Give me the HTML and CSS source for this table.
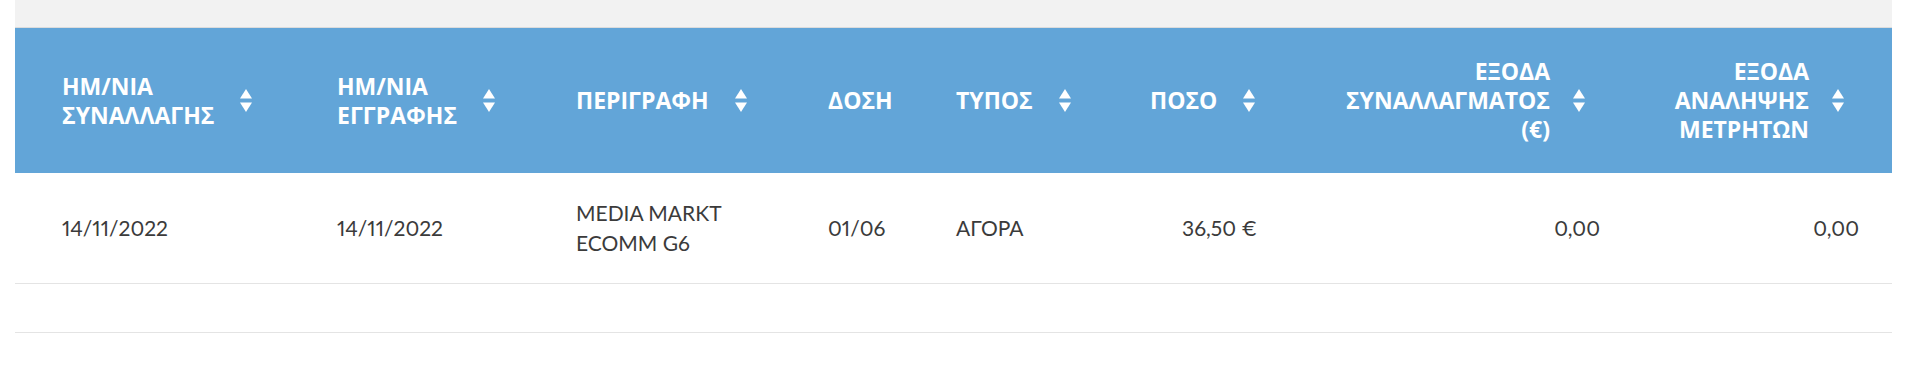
FILE: index.html
```html
<!DOCTYPE html>
<html lang="el">
<head>
<meta charset="utf-8">
<title>Κινήσεις</title>
<link rel="stylesheet" href="styles.css">
</head>
<body>
<div class="page">
  <div class="topbar"></div>
  <div class="table">
    <div class="row head">
      <div class="cell"><span class="label">ΗΜ/ΝΙΑ<br>ΣΥΝΑΛΛΑΓΗΣ</span><svg class="sort" viewBox="0 0 12 23" width="12" height="23"><polygon points="6,0 12,9.5 0,9.5"/><polygon points="0,13.5 12,13.5 6,23"/></svg></div>
      <div class="cell"><span class="label">ΗΜ/ΝΙΑ<br>ΕΓΓΡΑΦΗΣ</span><svg class="sort" viewBox="0 0 12 23" width="12" height="23"><polygon points="6,0 12,9.5 0,9.5"/><polygon points="0,13.5 12,13.5 6,23"/></svg></div>
      <div class="cell"><span class="label">ΠΕΡΙΓΡΑΦΗ</span><svg class="sort" viewBox="0 0 12 23" width="12" height="23"><polygon points="6,0 12,9.5 0,9.5"/><polygon points="0,13.5 12,13.5 6,23"/></svg></div>
      <div class="cell"><span class="label">ΔΟΣΗ</span></div>
      <div class="cell"><span class="label">ΤΥΠΟΣ</span><svg class="sort" viewBox="0 0 12 23" width="12" height="23"><polygon points="6,0 12,9.5 0,9.5"/><polygon points="0,13.5 12,13.5 6,23"/></svg></div>
      <div class="cell"><span class="label">ΠΟΣΟ</span><svg class="sort" viewBox="0 0 12 23" width="12" height="23"><polygon points="6,0 12,9.5 0,9.5"/><polygon points="0,13.5 12,13.5 6,23"/></svg></div>
      <div class="cell end"><span class="label">ΕΞΟΔΑ<br>ΣΥΝΑΛΛΑΓΜΑΤΟΣ<br>(€)</span><svg class="sort" viewBox="0 0 12 23" width="12" height="23"><polygon points="6,0 12,9.5 0,9.5"/><polygon points="0,13.5 12,13.5 6,23"/></svg></div>
      <div class="cell end"><span class="label">ΕΞΟΔΑ<br>ΑΝΑΛΗΨΗΣ<br>ΜΕΤΡΗΤΩΝ</span><svg class="sort" viewBox="0 0 12 23" width="12" height="23"><polygon points="6,0 12,9.5 0,9.5"/><polygon points="0,13.5 12,13.5 6,23"/></svg></div>
    </div>
    <div class="row data">
      <div class="cell">14/11/2022</div>
      <div class="cell">14/11/2022</div>
      <div class="cell desc">MEDIA MARKT ECOMM G6</div>
      <div class="cell">01/06</div>
      <div class="cell">ΑΓΟΡΑ</div>
      <div class="cell num">36,50 €</div>
      <div class="cell num">0,00</div>
      <div class="cell num">0,00</div>
    </div>
    <div class="row empty"></div>
  </div>
</div>
</body>
</html>
```
FILE: styles.css
```css
html, body {
  margin: 0;
  padding: 0;
  background: #ffffff;
}

.page {
  margin-left: 15px;
  width: 1877px;
}

.topbar {
  height: 27px;
  background: #f2f2f2;
  border-bottom: 1px solid #dcdcdc;
}

.row {
  display: grid;
  grid-template-columns: 275px 239px 252px 128px 194px 107px 343px 259px;
  padding: 0 33px 0 47px;
  align-items: center;
}

.head {
  height: 145px;
  background: #62a5d8;
  color: #ffffff;
  font-family: "Open Sans", "Noto Sans", sans-serif;
  font-weight: 700;
  font-size: 23px;
  line-height: 29px;
}

.head .cell {
  display: flex;
  align-items: center;
}

.head .cell.end {
  justify-content: flex-end;
  text-align: right;
}

.sort {
  flex: none;
  margin-left: 26px;
  fill: #ffffff;
}

.head .cell.end .sort {
  margin-left: 23px;
  margin-right: 15px;
}

.data {
  height: 110px;
  border-bottom: 1px solid #e4e4e4;
  font-family: Lato, "Open Sans", sans-serif;
  font-size: 21px;
  line-height: 30px;
  color: #3b3b3b;
  font-variant-numeric: proportional-nums;
}

.desc {
  padding-right: 40px;
}

.num {
  text-align: right;
}

.empty {
  height: 48px;
  border-bottom: 1px solid #e4e4e4;
}
```
